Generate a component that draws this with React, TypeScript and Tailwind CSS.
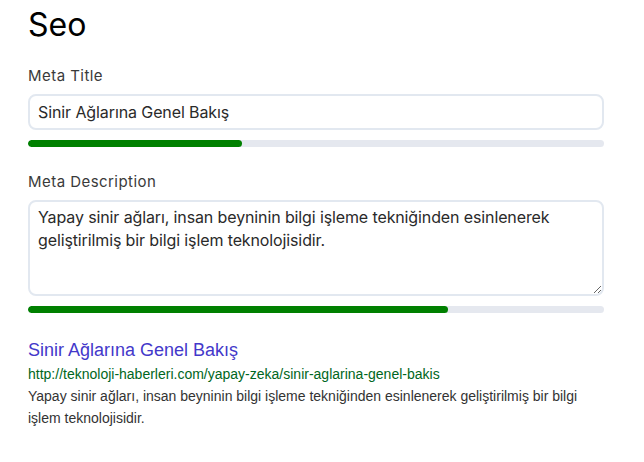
import React, { useState } from 'react'

const title = 'Sinir Ağlarına Genel Bakış'
const description =
  'Yapay sinir ağları, insan beyninin bilgi işleme tekniğinden esinlenerek geliştirilmiş bir bilgi işlem teknolojisidir.'
const url = 'http://teknoloji-haberleri.com/yapay-zeka/sinir-aglarina-genel-bakis'

function Meter({ value }: { value: number }) {
  return (
    <div className="h-[7px] w-full rounded-full bg-[#e5e8ef] overflow-hidden">
      <div className="h-full rounded-full bg-[#008000]" style={{ width: `${value}%` }} />
    </div>
  )
}

export default function App() {
  const [metaTitle, setMetaTitle] = useState(title)
  const [metaDesc, setMetaDesc] = useState(description)

  return (
    <div className="bg-white min-h-[462px] font-['Inter',sans-serif] text-[#222]">
      <div className="ml-7 w-[576px] pt-[7px]">
        <h1 className="text-[32px] leading-9 text-black">Seo</h1>

        <label className="block mt-[23px] mb-2 text-[15px] tracking-[0.45px] leading-5 text-[#3a3a3a]">Meta Title</label>
        <input
          value={metaTitle}
          onChange={(e) => setMetaTitle(e.target.value)}
          className="block w-full h-9 rounded-lg border-2 border-[#e2e8f0] px-2 text-base tracking-[-0.1px] text-[#2a2a2a] outline-none"
        />
        <div className="mt-[10px]">
          <Meter value={37.2} />
        </div>

        <label className="block mt-[25px] mb-2 text-[15px] tracking-[0.45px] leading-5 text-[#3a3a3a]">Meta Description</label>
        <textarea
          value={metaDesc}
          onChange={(e) => setMetaDesc(e.target.value)}
          className="block w-full h-[96px] rounded-lg border-2 border-[#e2e8f0] px-2 py-[4px] text-base tracking-[-0.12px] leading-[23px] text-[#2a2a2a] outline-none"
        />
        <div className="mt-[10px]">
          <Meter value={73} />
        </div>

        <div className="mt-[25px] font-['Liberation_Sans',Arial,sans-serif]">
          <div className="text-lg leading-6 text-[#4338ca]">{metaTitle}</div>
          <div className="mt-[2px] text-sm leading-5 text-[#006621]">{url}</div>
          <p className="mt-[1px] text-sm leading-[22px] text-[#333]">{metaDesc}</p>
        </div>
      </div>
    </div>
  )
}
